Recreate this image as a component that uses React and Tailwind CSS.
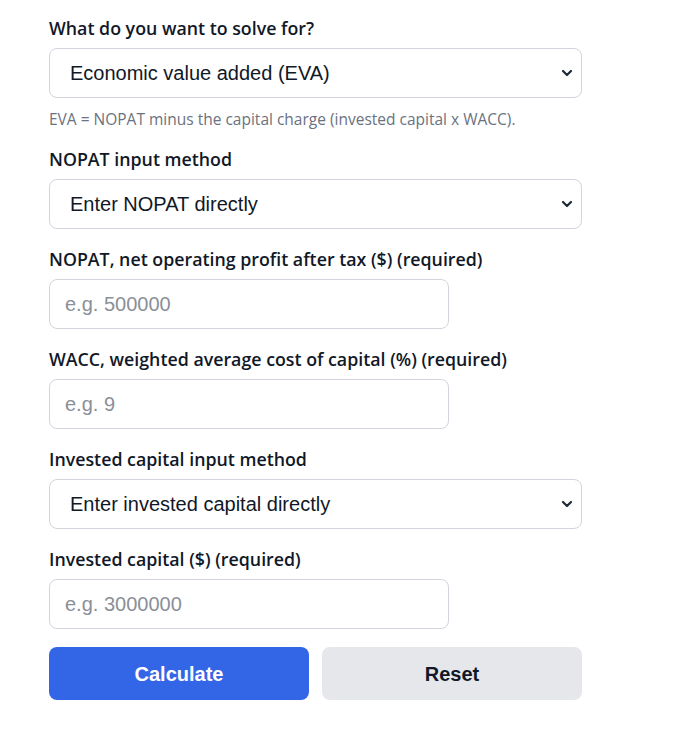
import { useState } from 'react';

const labelClass = 'block text-[17.8px] font-semibold leading-[22px] text-[#111827]';
const fieldClass =
  'h-[50px] rounded-lg border border-[#d1d5db] bg-white text-[20px] text-[#111827] outline-none';
const sans = { fontFamily: '"Segoe UI", "Open Sans", "Noto Sans", sans-serif' };
const arial = { fontFamily: '"Liberation Sans", Arial, sans-serif' };

const Field = ({ label, children, hint }) => (
  <div>
    <label className={labelClass} style={sans}>
      {label}
    </label>
    <div className="mt-[9px]">{children}</div>
    {hint && (
      <p className="mt-[11px] text-[15.5px] leading-5 text-[#6b7280]" style={sans}>
        {hint}
      </p>
    )}
  </div>
);

const Select = ({ value, options }) => (
  <div className="relative w-[533px]">
    <select
      defaultValue={value}
      className={`${fieldClass} w-full appearance-none px-5`}
      style={arial}
    >
      {options.map((option) => (
        <option key={option}>{option}</option>
      ))}
    </select>
    <svg
      className="pointer-events-none absolute right-[9px] top-1/2 -translate-y-1/2"
      width="12"
      height="8"
      viewBox="0 0 12 8"
      fill="none"
      stroke="#1f2937"
      strokeWidth="2.2"
      strokeLinecap="round"
      strokeLinejoin="round"
    >
      <path d="M2 2l4 4 4-4" />
    </svg>
  </div>
);

const Input = ({ placeholder }) => (
  <input
    type="text"
    placeholder={placeholder}
    className={`${fieldClass} w-[400px] px-[15px] placeholder:text-[#8a8f98]`}
    style={arial}
  />
);

export default function App() {
  const [, setTick] = useState(0);

  return (
    <div className="min-h-[745px] bg-white px-[49px] pt-[17px]">
      <form
        className="flex w-[533px] flex-col gap-[19px]"
        onSubmit={(e) => {
          e.preventDefault();
          setTick((t) => t + 1);
        }}
      >
        <Field
          label="What do you want to solve for?"
          hint="EVA = NOPAT minus the capital charge (invested capital x WACC)."
        >
          <Select
            value="Economic value added (EVA)"
            options={['Economic value added (EVA)', 'NOPAT', 'WACC', 'Invested capital']}
          />
        </Field>

        <Field label="NOPAT input method">
          <Select
            value="Enter NOPAT directly"
            options={['Enter NOPAT directly', 'Calculate from EBIT and tax rate']}
          />
        </Field>

        <Field label="NOPAT, net operating profit after tax ($) (required)">
          <Input placeholder="e.g. 500000" />
        </Field>

        <Field label="WACC, weighted average cost of capital (%) (required)">
          <Input placeholder="e.g. 9" />
        </Field>

        <Field label="Invested capital input method">
          <Select
            value="Enter invested capital directly"
            options={['Enter invested capital directly', 'Calculate from balance sheet']}
          />
        </Field>

        <Field label="Invested capital ($) (required)">
          <Input placeholder="e.g. 3000000" />
        </Field>

        <div className="-mt-px grid grid-cols-2 gap-[13px]" style={arial}>
          <button
            type="submit"
            className="h-[53px] rounded-lg bg-[#3366e6] text-[20px] font-bold text-white"
          >
            Calculate
          </button>
          <button
            type="reset"
            className="h-[53px] rounded-lg bg-[#e5e7eb] text-[20px] font-bold text-[#111827]"
          >
            Reset
          </button>
        </div>
      </form>
    </div>
  );
}
